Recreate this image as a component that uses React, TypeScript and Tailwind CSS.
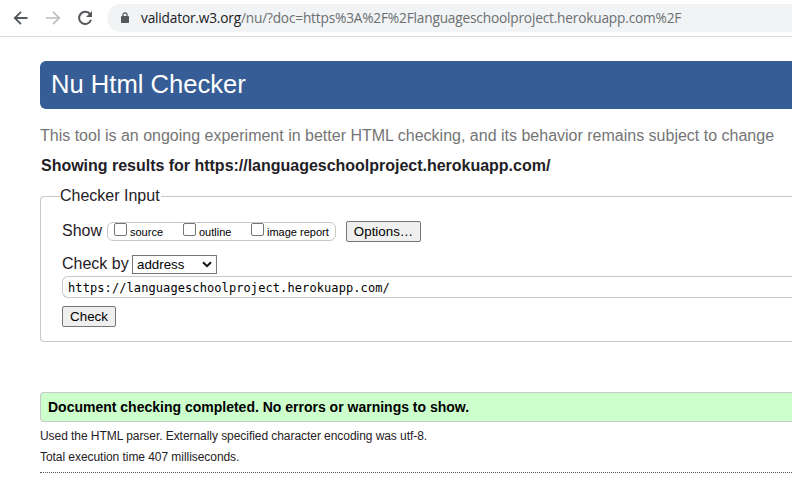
import React from "react";

function Toolbar() {
  return (
    <header className="flex h-[37px] items-start border-b border-[#d9dadc] bg-white">
      <svg className="h-9 w-[107px] shrink-0" viewBox="0 0 107 36" fill="none">
        <path d="M27.5 18H15M21 11.8L14.8 18L21 24.2" stroke="#55585d" strokeWidth="1.9" />
        <path d="M46 18H58.5M53 11.8L59.2 18L53 24.2" stroke="#babcbe" strokeWidth="1.7" />
        <path d="M90.2 14.4A6.1 6.1 0 1 0 91 19.8" stroke="#55585d" strokeWidth="2" />
        <path d="M92 11V17H86Z" fill="#55585d" />
      </svg>
      <div className="mt-1 flex h-7 flex-1 items-center rounded-l-full bg-[#f1f3f4] pl-[14px]">
        <svg className="h-3 w-2 shrink-0" viewBox="0 0 8 12" fill="none">
          <path d="M1.9 5V3.2A2.1 2.4 0 0 1 6.1 3.2V5" stroke="#55585d" strokeWidth="1.2" />
          <rect y="4" width="8" height="7" rx="0.8" fill="#55585d" />
        </svg>
        <div className="ml-3 whitespace-nowrap font-['Open_Sans','Noto_Sans',sans-serif] text-[13.7px] leading-7 tracking-[-0.19px] text-[#6b6f73]">
          <span className="text-[#202124]">validator.w3.org</span>/nu/?doc=https%3A%2F%2Flanguageschoolproject.herokuapp.com%2F
        </div>
      </div>
    </header>
  );
}

function Option({ label, className }: { label: string; className: string }) {
  return (
    <label className={`flex text-[11px] leading-[19px] ${className}`}>
      <input type="checkbox" className="mr-[3px] h-[13px] w-[13px] shrink-0 appearance-none rounded-[2px] border border-[#767676] bg-white" />
      {label}
    </label>
  );
}

export default function App() {
  return (
    <div className="h-[492px] w-[792px] overflow-hidden bg-white font-['Liberation_Sans',Arial,sans-serif] text-[#1f2126]">
      <Toolbar />
      <main className="flex flex-col whitespace-nowrap pl-10 pt-6">
        <h1 className="h-12 rounded-l-[6px] bg-[#365d95] pl-[11px] text-[25.6px] leading-[46px] text-white">Nu Html Checker</h1>
        <p className="mt-[18px] text-[16px] leading-[18px] text-[#757575]">
          This tool is an ongoing experiment in better HTML checking, and its behavior remains subject to change
        </p>
        <h2 className="mt-3 pl-px text-[16px] font-bold leading-[18px] tracking-[-0.015px]">Showing results for https://languageschoolproject.herokuapp.com/</h2>

        <fieldset className="mt-3 h-[155px] rounded-l-[4px] border border-r-0 border-[#c8c8c8] pl-[21px]">
          <legend className="-ml-[2px] h-[18px] pr-px text-[16px] leading-[18px]">Checker Input</legend>
          <div className="mt-4 flex h-[21px]">
            <span className="w-[45px] text-[16px] leading-[19px]">Show</span>
            <div className="mt-px flex h-[19px] w-[229px] rounded-[6px] border border-[#c8c8c8] pl-[6px] text-black">
              <Option label="source" className="w-[69px]" />
              <Option label="outline" className="w-[68px]" />
              <Option label="image report" className="" />
            </div>
            <button className="ml-[10px] h-[21px] w-[75px] rounded-[2px] border border-[#767676] bg-[#efefef] text-[13.33px] leading-[19px] text-black">Options…</button>
          </div>
          <div className="mt-[13px] flex h-[19px]">
            <span className="w-[70px] text-[16px] leading-[17px]">Check by</span>
            <div className="flex w-[85px] items-center justify-between border border-[#767676] bg-white pl-1 pr-1 text-[13.33px] leading-[17px] text-black">
              address
              <svg className="h-[7px] w-[10px]" viewBox="0 0 10 7" fill="none">
                <path d="M1 1.2L5 5.2L9 1.2" stroke="#111" strokeWidth="2" />
              </svg>
            </div>
          </div>
          <div className="mt-[2px] h-[22px] rounded-l-[6px] border border-r-0 border-[#c8c8c8] pl-[5px] font-['DejaVu_Sans_Mono',monospace] text-[12px] leading-[22px] tracking-[0.09px] text-black">
            https://languageschoolproject.herokuapp.com/
          </div>
          <button className="mt-2 block h-[21px] w-[54px] rounded-[2px] border border-[#767676] bg-[#efefef] text-[13.33px] leading-[19px] text-black">Check</button>
        </fieldset>

        <p className="mt-[50px] h-[30px] rounded-l-[4px] border border-r-0 border-[#c8c8c8] bg-[#ccffcc] pl-[7px] text-[14px] font-bold leading-7 text-black">
          Document checking completed. No errors or warnings to show.
        </p>
        <p className="mt-[6px] text-[12px] leading-4 tracking-[-0.055px]">Used the HTML parser. Externally specified character encoding was utf-8.</p>
        <p className="mt-[5px] text-[12px] leading-4 tracking-[-0.055px]">Total execution time 407 milliseconds.</p>
        <div className="mt-[7px] border-t border-dotted border-[#555]" />
      </main>
    </div>
  );
}
